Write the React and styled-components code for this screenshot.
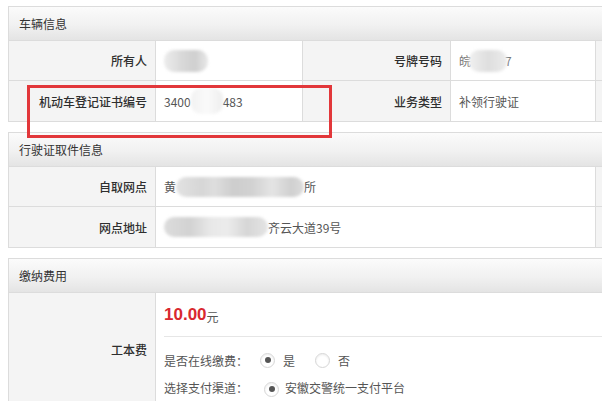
import React from "react";
import styled, { createGlobalStyle } from "styled-components";

const Global = createGlobalStyle`
  html, body { margin: 0; padding: 0; background: #fff; overflow: hidden; }
  body { font-family: "Noto Sans CJK SC", "Microsoft YaHei", sans-serif; font-size: 12px; color: #333; }
`;

const Page = styled.div`
  position: relative;
  width: 602px;
  box-sizing: border-box;
  padding: 6px 0 0 8px;
  overflow: hidden;
`;

const Panel = styled.section`
  border: 1px solid #dcdcdc;
  border-right: none;
  margin-bottom: 10px;
  background: #fff;
`;

const PanelHeader = styled.div`
  height: 33px;
  line-height: 33px;
  padding-left: 10px;
  background: linear-gradient(to bottom, #fbfbfb 0%, #f1f1f1 55%, #e4e4e4 100%);
  border-bottom: 1px solid #dcdcdc;
  color: #333;
  font-size: 12px;
`;

const Row = styled.div`
  display: grid;
  grid-template-columns: ${(p) => p.$cols};
  height: ${(p) => p.$h || 40}px;
  border-bottom: ${(p) => (p.$last ? "none" : "1px solid #dcdcdc")};
  box-sizing: border-box;
`;

const Label = styled.div`
  background: #f4f4f4;
  border-right: 1px solid #dcdcdc;
  display: flex;
  align-items: center;
  justify-content: flex-end;
  padding-right: 8px;
  color: #2f2f2f;
  font-size: 12px;
  font-weight: 500;
`;

const Value = styled.div`
  border-right: ${(p) => (p.$noBorder ? "none" : "1px solid #dcdcdc")};
  display: flex;
  align-items: center;
  padding-left: 8px;
  color: #555;
  font-size: 12px;
  white-space: nowrap;
  overflow: hidden;
`;

const Filler = styled.div`
  background: #f4f4f4;
`;

const Blur = styled.span`
  display: inline-block;
  width: ${(p) => p.$w}px;
  height: ${(p) => p.$h || 20}px;
  margin: 0 ${(p) => p.$mx || 0}px;
  border-radius: 10px;
  background: ${(p) => p.$bg};
  filter: blur(1.5px);
  vertical-align: middle;
`;

const Tail = styled.span`
  color: #777;
`;

const FeeCell = styled.div`
  display: flex;
  flex-direction: column;
  padding-left: 8px;
  overflow: hidden;
`;

const FeeTop = styled.div`
  height: 43px;
  display: flex;
  align-items: center;
  border-bottom: 1px solid #e6e6e6;
`;

const Amount = styled.span`
  color: #d9282f;
  font-family: "Liberation Sans", Arial, sans-serif;
  font-weight: bold;
  font-size: 17px;
`;

const Unit = styled.span`
  color: #555;
  font-size: 12px;
  margin-top: 3px;
`;

const OptLine = styled.div`
  display: flex;
  align-items: center;
  height: 20px;
  color: #555;
  margin-top: ${(p) => p.$mt}px;
`;

const OptLabel = styled.span`
  width: 96px;
`;

const Radio = styled.span`
  width: 13px;
  height: 13px;
  border-radius: 50%;
  border: 1px solid #d6d6d6;
  background: #fff;
  box-shadow: inset 0 1px 2px rgba(0,0,0,0.08);
  display: inline-flex;
  align-items: center;
  justify-content: center;
  margin: ${(p) => p.$m};
  &::after {
    content: "";
    width: 6px;
    height: 6px;
    border-radius: 50%;
    background: ${(p) => (p.$checked ? "#555" : "transparent")};
  }
`;

const RadioText = styled.span`
  color: #555;
`;

const Highlight = styled.div`
  position: absolute;
  left: 27px;
  top: 85px;
  width: 299px;
  height: 47px;
  border: 3px solid #e2373a;
  pointer-events: none;
`;

const c4 = "147px 147px 148px 145px 1fr";
const c2 = "147px 440px 1fr";

export default function App() {
  return (
    <>
      <Global />
      <Page>
        <Panel>
          <PanelHeader>车辆信息</PanelHeader>
          <Row $cols={c4}>
            <Label>所有人</Label>
            <Value>
              <Blur $w={44} $h={22} $bg="linear-gradient(90deg,#ececec 0%,#d9d9d9 40%,#cfcfcf 70%,#e8e8e8 100%)" />
            </Value>
            <Label>号牌号码</Label>
            <Value>
              <Tail>皖</Tail>
              <Blur $w={38} $h={22} $mx={-2} $bg="linear-gradient(90deg,#f0f0f0,#dedede 50%,#ececec)" />
              <Tail>7</Tail>
            </Value>
            <Filler />
          </Row>
          <Row $cols={c4} $last>
            <Label>机动车登记证书编号</Label>
            <Value>
              3400
              <Blur $w={32} $h={26} $bg="linear-gradient(90deg,#f2f2f2,#fafafa 50%,#eeeeee)" />
              483
            </Value>
            <Label>业务类型</Label>
            <Value>补领行驶证</Value>
            <Filler />
          </Row>
        </Panel>

        <Panel>
          <PanelHeader>行驶证取件信息</PanelHeader>
          <Row $cols={c2}>
            <Label>自取网点</Label>
            <Value>
              黄
              <Blur $w={128} $h={20} $bg="linear-gradient(90deg,#e2e2e2 0%,#d6d6d6 20%,#dedede 30%,#cdcdcd 45%,#d2d2d2 60%,#e4e4e4 75%,#d0d0d0 90%,#dcdcdc 100%)" />
              所
            </Value>
            <Filler />
          </Row>
          <Row $cols={c2} $last>
            <Label>网点地址</Label>
            <Value>
              <Blur $w={104} $h={20} $bg="linear-gradient(90deg,#dcdcdc 0%,#d2d2d2 25%,#e8e8e8 45%,#ececec 60%,#d6d6d6 80%,#e4e4e4 100%)" />
              齐云大道39号
            </Value>
            <Filler />
          </Row>
        </Panel>

        <Panel>
          <PanelHeader>缴纳费用</PanelHeader>
          <Row $cols="147px 1fr" $h={112} $last>
            <Label>工本费</Label>
            <FeeCell>
              <FeeTop>
                <Amount>10.00</Amount>
                <Unit>元</Unit>
              </FeeTop>
              <OptLine $mt={13}>
                <OptLabel>是否在线缴费：</OptLabel>
                <Radio $checked $m="0 8px 0 0" />
                <RadioText>是</RadioText>
                <Radio $m="0 8px 0 20px" />
                <RadioText>否</RadioText>
              </OptLine>
              <OptLine $mt={7}>
                <OptLabel>选择支付渠道：</OptLabel>
                <Radio $checked $m="4px 6px 0 4px" />
                <RadioText>安徽交警统一支付平台</RadioText>
              </OptLine>
            </FeeCell>
          </Row>
        </Panel>
        <Highlight />
      </Page>
    </>
  );
}
